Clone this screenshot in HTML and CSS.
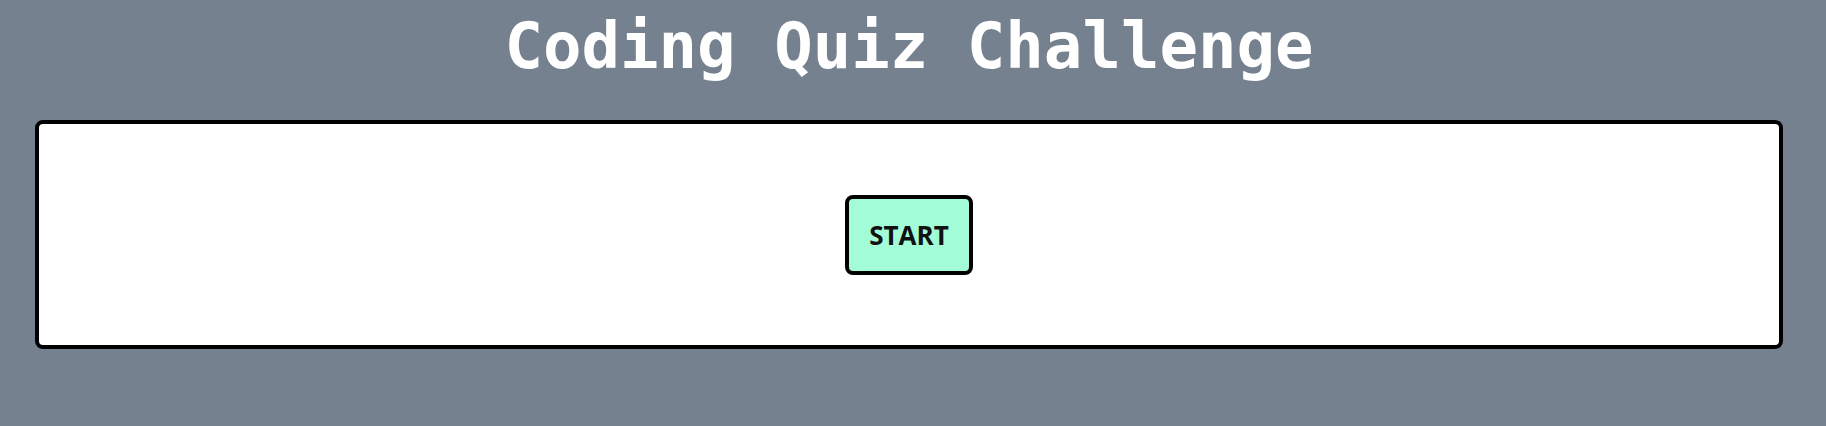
FILE: index.html
```html
<!DOCTYPE html>
<html lang="en">
<head>
<meta charset="utf-8">
<title>Coding Quiz Challenge</title>
<link rel="stylesheet" href="styles.css">
</head>
<body>
<main class="page">
  <h1 class="title">Coding Quiz Challenge</h1>
  <section class="card">
    <button class="start-btn" type="button">START</button>
  </section>
</main>
</body>
</html>
```
FILE: styles.css
```css
html, body {
  margin: 0;
  padding: 0;
  background: #76818f;
}
body {
  height: 426px;
  overflow: hidden;
}
.page {
  padding: 0 43px 0 35px;
  display: flex;
  flex-direction: column;
}
.title {
  margin: 0;
  height: 120px;
  padding-top: 8px;
  box-sizing: border-box;
  text-align: center;
  color: #ffffff;
  font-family: "DejaVu Sans Mono", "Liberation Mono", monospace;
  font-weight: bold;
  font-size: 64px;
  line-height: 76px;
}
.card {
  background: #ffffff;
  border: 4px solid #000;
  border-radius: 8px;
  height: 229px;
  box-sizing: border-box;
  display: flex;
  align-items: center;
  justify-content: center;
}
.start-btn {
  width: 128px;
  height: 80px;
  box-sizing: border-box;
  margin-top: 0;
  background: #a2fcd8;
  border: 4px solid #000;
  border-radius: 8px;
  font-family: "Open Sans", "Noto Sans", sans-serif;
  font-weight: 700;
  font-size: 26px;
  color: #111;
  padding: 0;
  cursor: pointer;
}
```
